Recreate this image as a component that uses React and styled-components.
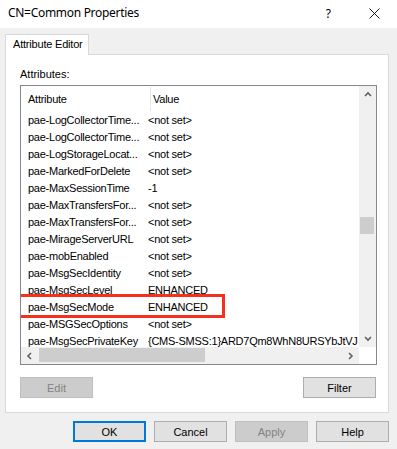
import React from 'react';
import styled, { createGlobalStyle } from 'styled-components';

const GlobalStyle = createGlobalStyle`
  html, body {
    margin: 0;
    padding: 0;
    background: #f0f0f0;
  }
`;

const rows = [
  ['pae-LogCollectorTime...', '<not set>'],
  ['pae-LogCollectorTime...', '<not set>'],
  ['pae-LogStorageLocat...', '<not set>'],
  ['pae-MarkedForDelete', '<not set>'],
  ['pae-MaxSessionTime', '-1'],
  ['pae-MaxTransfersFor...', '<not set>'],
  ['pae-MaxTransfersFor...', '<not set>'],
  ['pae-MirageServerURL', '<not set>'],
  ['pae-mobEnabled', '<not set>'],
  ['pae-MsgSecIdentity', '<not set>'],
  ['pae-MsgSecLevel', 'ENHANCED'],
  ['pae-MsgSecMode', 'ENHANCED'],
  ['pae-MSGSecOptions', '<not set>'],
  ['pae-MsgSecPrivateKey', '{CMS-SMSS:1}ARD7Qm8WhN8URSYbJtVJ'],
];

const Arrow = ({ dir }) => {
  const pts = {
    up: '1,5 4,2 7,5',
    down: '1,2 4,5 7,2',
    left: '5,1 2,4 5,7',
    right: '2,1 5,4 2,7',
  }[dir];
  return (
    <svg width="8" height="8" viewBox="0 0 8 8">
      <polyline points={pts} fill="none" stroke="#606060" strokeWidth="1.6" />
    </svg>
  );
};

const App = () => {
  return (
    <>
      <GlobalStyle />
      <Window>
        <TitleBar>
          <Title>CN=Common Properties</Title>
          <TitleButtons>
            <Help>?</Help>
            <svg width="11" height="11" viewBox="0 0 11 11">
              <path d="M0.5 0.5 L10.5 10.5 M10.5 0.5 L0.5 10.5" stroke="#1a1a1a" strokeWidth="1" />
            </svg>
          </TitleButtons>
        </TitleBar>

        <Body>
          <TabStrip>
            <Tab>Attribute Editor</Tab>
          </TabStrip>
          <TabPage>
            <Label>Attributes:</Label>
            <ListBox>
              <ListMain>
                <ListContent>
                  <Header>
                    <HeaderCell width={130} divider>Attribute</HeaderCell>
                    <HeaderCell>Value</HeaderCell>
                  </Header>
                  {rows.map(([a, v], i) => (
                    <Row key={i}>
                      <NameCell>{a}</NameCell>
                      <ValueCell>{v}</ValueCell>
                    </Row>
                  ))}
                  <Highlight />
                </ListContent>
                <VScroll>
                  <ArrowBox><Arrow dir="up" /></ArrowBox>
                  <VTrack>
                    <VThumb />
                  </VTrack>
                  <ArrowBox><Arrow dir="down" /></ArrowBox>
                </VScroll>
              </ListMain>
              <HScrollRow>
                <HScroll>
                  <ArrowBox><Arrow dir="left" /></ArrowBox>
                  <HTrack>
                    <HThumb />
                  </HTrack>
                  <ArrowBox><Arrow dir="right" /></ArrowBox>
                </HScroll>
                <Corner />
              </HScrollRow>
            </ListBox>
            <PanelButtons>
              <Button disabled>Edit</Button>
              <Button>Filter</Button>
            </PanelButtons>
          </TabPage>
          <DialogButtons>
            <Button primary>OK</Button>
            <Button>Cancel</Button>
            <Button disabled>Apply</Button>
            <Button>Help</Button>
          </DialogButtons>
        </Body>
      </Window>
    </>
  );
};

export default App;

const Window = styled.div`
  width: 397px;
  height: 449px;
  background: #f0f0f0;
  display: flex;
  flex-direction: column;
  overflow: hidden;
  font-family: 'Liberation Sans', Arial, sans-serif;
  font-size: 11px;
  color: #000;
`;

const TitleBar = styled.div`
  height: 28px;
  background: #fff;
  display: flex;
  align-items: center;
  justify-content: space-between;
  padding: 0 17px 0 8px;
`;

const Title = styled.div`
  font-family: 'Noto Sans', sans-serif;
  font-size: 12px;
  letter-spacing: -0.3px;
  margin-top: -3px;
`;

const TitleButtons = styled.div`
  display: flex;
  align-items: center;
  gap: 38px;
  margin-top: -2px;
`;

const Help = styled.span`
  font-family: 'Noto Sans', sans-serif;
  font-size: 12px;
`;

const Body = styled.div`
  padding: 6px 8px 0 5px;
  display: flex;
  flex-direction: column;
`;

const TabStrip = styled.div`
  display: flex;
  height: 20px;
`;

const Tab = styled.div`
  width: 84px;
  height: 21px;
  box-sizing: border-box;
  background: #fff;
  border: 1px solid #d9d9d9;
  border-bottom: none;
  padding: 3px 0 0 7px;
  letter-spacing: -0.2px;
  position: relative;
  z-index: 1;
`;

const TabPage = styled.div`
  width: 384px;
  height: 359px;
  box-sizing: border-box;
  background: #fff;
  border: 1px solid #d9d9d9;
  padding: 13px 11px 0 14px;
  display: flex;
  flex-direction: column;
`;

const Label = styled.div`
  height: 17px;
`;

const ListBox = styled.div`
  width: 357px;
  height: 280px;
  box-sizing: border-box;
  border: 1px solid #828790;
  display: flex;
  flex-direction: column;
`;

const ListMain = styled.div`
  flex: 1;
  display: flex;
  min-height: 0;
`;

const ListContent = styled.div`
  flex: 1;
  overflow: hidden;
  position: relative;
  letter-spacing: -0.25px;
`;

const Header = styled.div`
  height: 26px;
  display: flex;
  align-items: center;
`;

const HeaderCell = styled.div`
  width: ${p => (p.width ? `${p.width}px` : 'auto')};
  flex: ${p => (p.width ? 'none' : 1)};
  box-sizing: border-box;
  padding-left: ${p => (p.divider ? '7px' : '2px')};
  height: 24px;
  line-height: 24px;
  border-right: ${p => (p.divider ? '1px solid #e5e5e5' : 'none')};
`;

const Row = styled.div`
  height: 17px;
  line-height: 17px;
  display: flex;
  white-space: nowrap;
`;

const NameCell = styled.div`
  width: 127px;
  flex: none;
  padding-left: 7px;
  box-sizing: border-box;
  overflow: hidden;
`;

const ValueCell = styled.div`
  flex: 1;
  overflow: hidden;
`;

const Highlight = styled.div`
  position: absolute;
  left: -9px;
  top: 208px;
  width: 213px;
  height: 24px;
  box-sizing: border-box;
  border: 3px solid #f5301c;
`;

const VScroll = styled.div`
  width: 17px;
  background: #f0f0f0;
  display: flex;
  flex-direction: column;
`;

const ArrowBox = styled.div`
  width: 17px;
  height: 17px;
  flex: none;
  display: flex;
  align-items: center;
  justify-content: center;
`;

const VTrack = styled.div`
  flex: 1;
  padding: 114px 2px 0 1px;
`;

const VThumb = styled.div`
  height: 17px;
  background: #cdcdcd;
`;

const HScrollRow = styled.div`
  height: 17px;
  display: flex;
`;

const HScroll = styled.div`
  flex: 1;
  background: #f0f0f0;
  display: flex;
`;

const HTrack = styled.div`
  flex: 1;
  padding: 1px 0 2px 1px;
`;

const HThumb = styled.div`
  width: 166px;
  height: 100%;
  background: #cdcdcd;
`;

const Corner = styled.div`
  width: 17px;
  background: #fff;
`;

const PanelButtons = styled.div`
  display: flex;
  justify-content: space-between;
  margin-top: 12px;
  padding-right: 1px;
`;

const Button = styled.button`
  width: 73px;
  height: 21px;
  box-sizing: border-box;
  padding: 0;
  font-family: 'Liberation Sans', Arial, sans-serif;
  font-size: 11px;
  color: ${p => (p.disabled ? '#838383' : '#000')};
  background: ${p => (p.disabled ? '#cccccc' : '#e1e1e1')};
  border: ${p =>
    p.primary ? '2px solid #0078d7' : p.disabled ? '1px solid #bfbfbf' : '1px solid #adadad'};
  border-radius: 0;
`;

const DialogButtons = styled.div`
  display: flex;
  justify-content: flex-end;
  gap: 8px;
  margin-top: 8px;
`;
